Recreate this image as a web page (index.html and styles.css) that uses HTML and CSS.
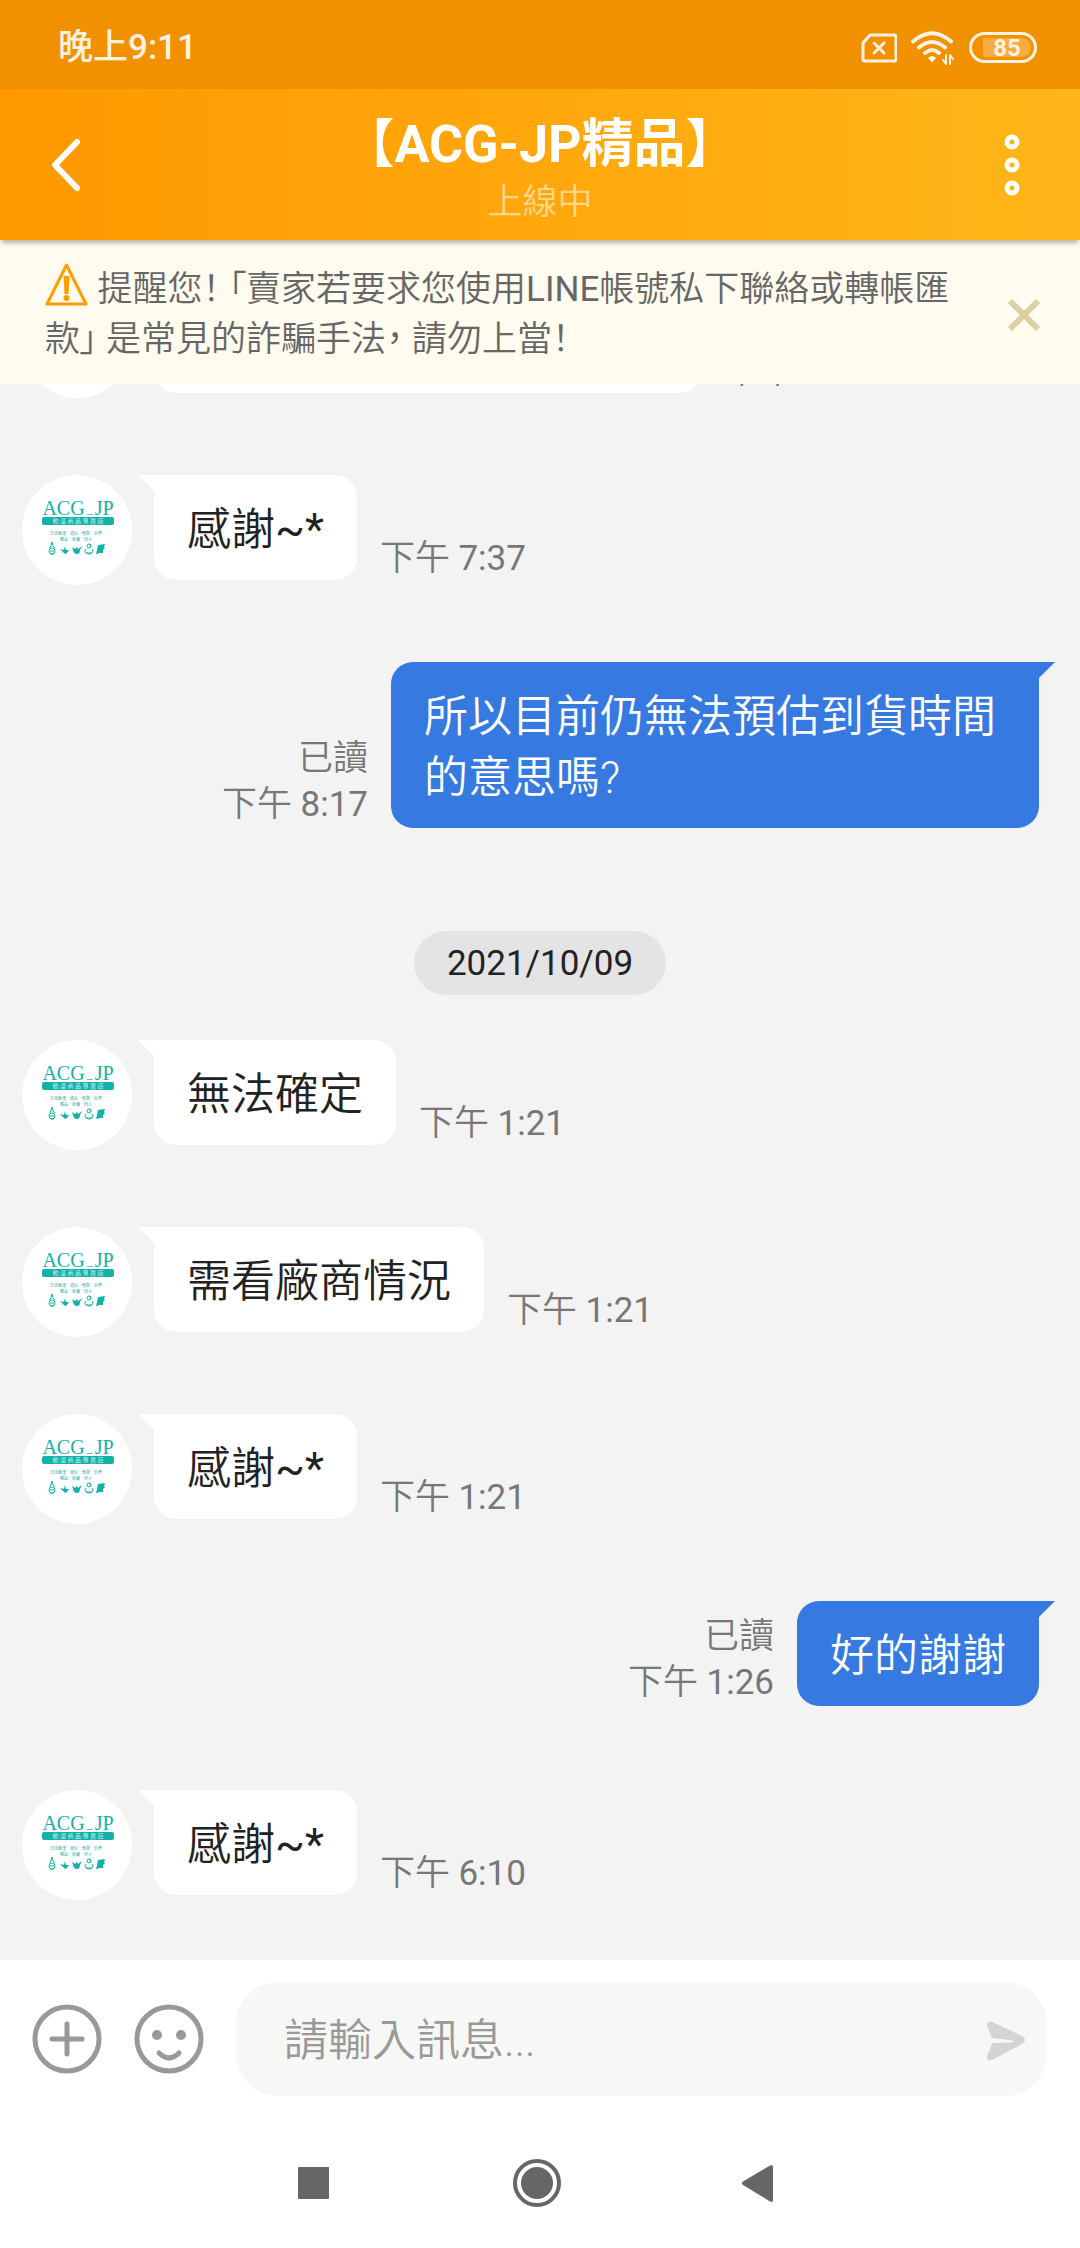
FILE: index.html
```html
<!DOCTYPE html>
<html lang="zh-Hant">
<head>
    <meta charset="UTF-8">
    <meta name="viewport" content="width=device-width, initial-scale=1.0">
    <title>【ACG-JP精品】</title>
    <link rel="stylesheet" href="styles.css">
</head>
<body>

    <!-- Shop logo, reused by every avatar -->
    <svg class="sprite" aria-hidden="true">
        <symbol id="shop-logo" viewBox="0 0 110 110">
            <text class="logo-name" x="56" y="40">ACG<tspan class="logo-dash" dx="2" dy="-2">_</tspan><tspan dx="2" dy="2">JP</tspan></text>
            <rect class="logo-fill" x="20" y="42" width="72" height="8" rx="2"/>
            <text class="logo-band" x="56" y="48">動 漫 商 品 專 賣 店</text>
            <text class="logo-small" x="54" y="60">日本動漫．遊玩．輕鬆．玩樂</text>
            <text class="logo-small" x="54" y="66">精品．收藏．同人</text>
            <g class="logo-line">
                <circle cx="30" cy="76" r="3"/>
                <path d="M28 73l1-3 1-3 1 4 2 2M28 76h4M29 79h3M67 69l2 1-1 2M64 74a4 3 0 1 0 6 0M64 78h6"/>
                <circle cx="67" cy="71" r="2"/>
            </g>
            <path class="logo-fill" d="M38 74l4 1 1-4 1 4 3 0-2 3-2 1-2-2zM50 72l3 2 2-2 1 2 4-3-2 4c0 2-1 4-3 4s-4-2-4-4zM76 70l7-1-1 3 1 1-2 2v3l-3 0-4 1 1-4z"/>
        </symbol>
    </svg>

    <div class="status-bar">
        <span>晚上9:11</span>
        <div class="status-icons">
            <svg width="36" height="30" viewBox="0 0 36 30">
                <path class="line" stroke-width="3" d="M9 2h24q2 0 2 2v22q0 2-2 2H4q-2 0-2-2V10z"/>
                <path class="line" stroke-width="3" d="M13 10l10 10M23 10L13 20"/>
            </svg>
            <svg width="44" height="34" viewBox="0 0 44 34">
                <path class="line" stroke-width="4" d="M2 10.500Q21-6 40 10.500M8 16.500q13-11 26 0M14 22q7-6 14 0"/>
                <path fill="currentColor" d="M17 27q4-4 8 0l-4 4.500z"/>
                <path class="line" stroke-width="2" d="M35 24v9l-3-4M39 33v-9l3 4"/>
            </svg>
            <div class="battery"><span>85</span></div>
        </div>
    </div>

    <header class="header">
        <button type="button" aria-label="返回">
            <svg width="60" height="60" viewBox="0 0 60 60"><path class="line" stroke-width="6" d="M41 7L19 30l22 23"/></svg>
        </button>
        <div class="header-title">
            <h1>【ACG-JP精品】</h1>
            <p>上線中</p>
        </div>
        <button type="button" aria-label="更多">
            <svg width="60" height="68" viewBox="0 0 60 68">
                <g class="line" stroke-width="5">
                    <circle cx="28" cy="11" r="5"/>
                    <circle cx="28" cy="34" r="5"/>
                    <circle cx="28" cy="57" r="5"/>
                </g>
            </svg>
        </button>
    </header>

    <div class="notice">
        <p>
            <svg class="warning" width="44" height="44" viewBox="0 0 44 44">
                <path fill="none" stroke="#ff9d00" stroke-width="3" stroke-linejoin="round" d="M21.500 3L41 42H2z"/>
                <path fill="#ff9d00" d="M18.500 14h6l-1 18h-4z"/>
                <circle fill="#ff9d00" cx="21.500" cy="36" r="3"/>
            </svg>
            提醒您！ 「賣家若要求您使用<span class="latin">LINE</span>帳號私下聯絡或轉帳匯<br>款」 是常見的詐騙手法， 請勿上當！
        </p>
        <button type="button" aria-label="關閉">
            <svg width="34" height="34" viewBox="0 0 34 34"><path fill="none" stroke="#ddcfa5" stroke-width="6" d="M3 3l28 28M31 3L3 31"/></svg>
        </button>
    </div>

    <main class="chat">
        <div class="message">
            <div class="avatar"></div>
            <div class="bubble bubble-cut"></div>
            <div class="meta">下午 <time>7:37</time></div>
        </div>
        <div class="message">
            <svg class="avatar"><use href="#shop-logo"/></svg>
            <div class="bubble">感謝<span class="latin">~*</span></div>
            <div class="meta">下午 <time>7:37</time></div>
        </div>
        <div class="message mine">
            <div class="bubble">所以目前仍無法預估到貨時間的意思嗎?</div>
            <div class="meta">已讀<br>下午 <time>8:17</time></div>
        </div>

        <div class="date">2021/10/09</div>

        <div class="message">
            <svg class="avatar"><use href="#shop-logo"/></svg>
            <div class="bubble">無法確定</div>
            <div class="meta">下午 <time>1:21</time></div>
        </div>
        <div class="message">
            <svg class="avatar"><use href="#shop-logo"/></svg>
            <div class="bubble">需看廠商情況</div>
            <div class="meta">下午 <time>1:21</time></div>
        </div>
        <div class="message">
            <svg class="avatar"><use href="#shop-logo"/></svg>
            <div class="bubble">感謝<span class="latin">~*</span></div>
            <div class="meta">下午 <time>1:21</time></div>
        </div>
        <div class="message mine">
            <div class="bubble">好的謝謝</div>
            <div class="meta">已讀<br>下午 <time>1:26</time></div>
        </div>
        <div class="message">
            <svg class="avatar"><use href="#shop-logo"/></svg>
            <div class="bubble">感謝<span class="latin">~*</span></div>
            <div class="meta">下午 <time>6:10</time></div>
        </div>
    </main>

    <form class="composer">
        <button type="button" aria-label="新增">
            <svg width="70" height="70" viewBox="0 0 70 70">
                <g class="line" stroke-width="5">
                    <circle cx="35" cy="35" r="32"/>
                    <path d="M35 20v30M20 35h30"/>
                </g>
            </svg>
        </button>
        <button type="button" aria-label="表情">
            <svg width="70" height="70" viewBox="0 0 70 70">
                <g class="line" stroke-width="5">
                    <circle cx="35" cy="35" r="32"/>
                    <path d="M25 49q10 10 20 0"/>
                </g>
                <circle fill="currentColor" cx="23" cy="31" r="5"/>
                <circle fill="currentColor" cx="47" cy="31" r="5"/>
            </svg>
        </button>
        <div class="field">
            <input type="text" aria-label="訊息" placeholder="請輸入訊息...">
            <button type="submit" aria-label="送出">
                <svg width="40" height="40" viewBox="0 0 40 40"><path fill="#d4d4d4" d="M5.500.500L36 15q6 4 0 8L5 39.500Q0 40 1 35L6.500 22Q28 21.500 28 20.500 28 19 6 17L1 4.500Q1 0 5.500.500z"/></svg>
            </button>
        </div>
    </form>

    <nav class="system-nav">
        <button type="button" aria-label="最近使用">
            <svg width="48" height="48" viewBox="0 0 48 48"><rect x="8" y="8" width="31" height="32" rx="1"/></svg>
        </button>
        <button type="button" aria-label="主畫面">
            <svg width="48" height="48" viewBox="0 0 48 48">
                <circle cx="24" cy="24" r="16"/>
                <circle fill="none" stroke="currentColor" stroke-width="4" cx="24" cy="24" r="22"/>
            </svg>
        </button>
        <button type="button" aria-label="上一頁">
            <svg width="48" height="48" viewBox="0 0 48 48"><path d="M7 22.500L34 6.500q3-1 3 1v34q0 2-3 1L7 26q-2-2 0-3.500z"/></svg>
        </button>
    </nav>

</body>
</html>
```

FILE: styles.css
```css
* { box-sizing: border-box; }
body {
    margin: 0;
    min-height: 100vh;
    display: flex;
    flex-direction: column;
    background: #fff;
    color: #222;
    font-family: Roboto, "Noto Sans CJK TC", sans-serif;
    font-size: 35px;
}
h1, p { margin: 0; }
svg { display: block; }
button { display: block; padding: 0; border: 0; background: none; color: inherit; cursor: pointer; }
.sprite { position: absolute; width: 0; height: 0; }
.line { fill: none; stroke: currentColor; stroke-linecap: round; stroke-linejoin: round; }
.latin, time { font-weight: 400; }

/* Status bar */
.status-bar {
    display: flex;
    justify-content: space-between;
    align-items: center;
    height: 89px;
    padding: 6px 43px 0 58px;
    background: #f29100;
    color: #fff2e0;
    font-weight: 500;
    line-height: 40px;
}
.status-icons { display: flex; align-items: center; gap: 14px; }
.battery {
    display: flex;
    width: 68px;
    height: 31px;
    padding: 3px;
    border: 3px solid currentColor;
    border-radius: 16px;
}
.battery span {
    flex: 1;
    margin-left: 8px;
    border-radius: 2px 10px 10px 2px;
    background: #f7ac40;
    font-size: 24px;
    font-weight: 700;
    line-height: 20px;
    text-align: center;
}

/* Header */
.header {
    position: relative;
    display: flex;
    justify-content: space-between;
    align-items: center;
    height: 151px;
    padding: 0 36px;
    background: linear-gradient(90deg, #ff9900, #ffb618);
    box-shadow: 0 5px 5px -2px rgba(0, 0, 0, 0.3);
    color: #fff;
    text-align: center;
}
.header-title { padding-top: 5px; }
.header h1 { font-size: 52px; font-weight: 700; line-height: 72px; }
.header p { color: #ffd78c; font-weight: 350; line-height: 44px; }

/* Warning notice */
.notice {
    display: flex;
    justify-content: space-between;
    align-items: center;
    padding: 25px 39px 19px 45px;
    background: #fffbee;
    color: #666;
    font-feature-settings: "palt";
    font-weight: 350;
    line-height: 50px;
}
.notice p { white-space: nowrap; }
.warning { display: inline-block; margin-top: -6px; vertical-align: -5px; }

/* Chat */
.chat {
    flex: 1 1 0;
    display: flex;
    flex-direction: column;
    justify-content: flex-end;
    overflow: hidden;
    padding: 0 22px 60px;
    background: #f3f3f3;
}
.message { display: flex; flex-shrink: 0; align-items: flex-start; margin-bottom: 77px; }
.message:last-child { margin-bottom: 0; }
.mine { flex-direction: row-reverse; padding-right: 19px; margin-bottom: 84px; }
.avatar { width: 110px; height: 110px; margin-right: 22px; border-radius: 50%; background: #fff; }
.bubble {
    position: relative;
    min-height: 105px;
    max-width: 648px;
    padding: 25px 33px 19px;
    border-radius: 0 22px 22px 22px;
    background: #fff;
    font-size: 44px;
    font-weight: 350;
    line-height: 61px;
}
.bubble::before {
    content: "";
    position: absolute;
    top: 0;
    right: 100%;
    width: 16px;
    height: 16px;
    background: inherit;
    clip-path: polygon(0 0, 100% 0, 100% 100%);
}
.bubble-cut { width: 548px; }
.mine .bubble { border-radius: 22px 0 22px 22px; background: #3679e0; color: #fff; }
.mine .bubble::before { right: auto; left: 100%; clip-path: polygon(0 0, 100% 0, 0 100%); }
.meta { align-self: flex-end; padding: 0 23px 3px; color: #777; font-weight: 350; line-height: 46px; }
.mine .meta { padding-bottom: 0; text-align: right; }
.date {
    flex-shrink: 0;
    align-self: center;
    margin: 19px 0 45px;
    padding: 2px 33px 0;
    border-radius: 32px;
    background: #e4e4e4;
    line-height: 62px;
}

/* Shop logo */
.logo-fill { fill: #14b1aa; }
.logo-line { fill: none; stroke: #14b1aa; stroke-width: 1px; }
.logo-name { fill: #14b1aa; font-family: "Liberation Serif", serif; font-size: 20px; text-anchor: middle; }
.logo-dash { font-size: 12px; }
.logo-band { fill: #c8efec; font-size: 6px; text-anchor: middle; }
.logo-small { fill: #14b1aa; font-size: 4px; text-anchor: middle; }

/* Message box */
.composer { display: flex; align-items: center; gap: 32px; padding: 22px 33px 22px 32px; color: #999; }
.field {
    flex: 1;
    display: flex;
    align-items: center;
    height: 114px;
    padding: 3px 21px 0 48px;
    border-radius: 42px;
    background: #f7f7f5;
}
.field input {
    flex: 1;
    min-width: 0;
    padding: 0;
    border: 0;
    outline: 0;
    background: none;
    color: #222;
    font: inherit;
    font-size: 44px;
    font-weight: 350;
}
.field input::placeholder { color: #999; opacity: 1; }

/* System navigation */
.system-nav {
    display: flex;
    justify-content: center;
    align-items: center;
    gap: 175px;
    height: 130px;
    padding-right: 6px;
    color: #666;
}
.system-nav svg { fill: currentColor; }
```
